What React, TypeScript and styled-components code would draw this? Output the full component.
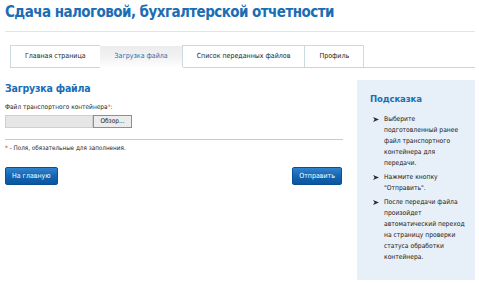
import React from 'react';
import styled, { createGlobalStyle } from 'styled-components';

const FONT = '"DejaVu Sans Condensed", "Liberation Sans", Arial, sans-serif';
const BLUE = '#1b6db4';

const GlobalStyle = createGlobalStyle`
  html, body {
    margin: 0;
    padding: 0;
    background: #ffffff;
  }
  body {
    font-family: ${FONT};
    color: #222;
  }
`;

const Page = styled.div`
  width: 479px;
  height: 283px;
  box-sizing: border-box;
  padding: 0 4px 0 5px;
  overflow: hidden;
`;

const Header = styled.h1`
  margin: 0;
  padding: 0 0 7px;
  font-size: 15px;
  line-height: 24px;
  letter-spacing: -0.55px;
  font-weight: bold;
  color: ${BLUE};
  border-bottom: 1px solid #dfe5e8;
  white-space: nowrap;
`;

const TabBar = styled.div`
  display: flex;
  margin: 13px 0 0 5px;
  border-bottom: 1px solid #c5d6dd;
`;

const Tab = styled.div<{ active?: boolean }>`
  line-height: 21px;
  padding: 0 14px;
  font-size: 7px;
  white-space: nowrap;
  cursor: pointer;
  color: ${p => (p.active ? BLUE : '#222')};
  border: 1px solid ${p => (p.active ? 'transparent' : '#c9dae0')};
  border-bottom: none;
  margin-right: -1px;
  background: ${p =>
    p.active ? 'linear-gradient(to bottom, #ececec 0%, #f2f2f2 50%, #ffffff 100%)' : '#ffffff'};
  margin-bottom: ${p => (p.active ? '-1px' : '0')};
  height: ${p => (p.active ? '22px' : '21px')};
`;

const Body = styled.div`
  display: flex;
  justify-content: space-between;
  margin-top: 12px;
`;

const Main = styled.div`
  width: 338px;
`;

const SectionTitle = styled.h2`
  margin: 0;
  font-size: 10.5px;
  line-height: 16px;
  letter-spacing: -0.2px;
  font-weight: bold;
  color: ${BLUE};
`;

const FieldLabel = styled.div`
  margin-top: 6px;
  font-size: 6.5px;
  line-height: 11px;
`;

const Req = styled.span`
  color: #e03a3a;
`;

const FileRow = styled.div`
  display: flex;
  margin-top: 2px;
  height: 13px;
`;

const FileField = styled.div`
  width: 88px;
  box-sizing: border-box;
  background: #e6e6e6;
  border: 1px solid #cfcfcf;
`;

const BrowseButton = styled.button`
  width: 39px;
  height: 13px;
  padding: 0;
  box-sizing: border-box;
  border: 1px solid #8f8f8f;
  background: #ececec;
  font-family: ${FONT};
  font-size: 6.5px;
  line-height: 11px;
  color: #222;
`;

const Divider = styled.div`
  margin-top: 11px;
  border-top: 1px solid #b9d0d8;
`;

const Note = styled.div`
  margin-top: 3px;
  font-size: 6.3px;
  line-height: 10px;
`;

const Actions = styled.div`
  display: flex;
  justify-content: space-between;
  margin-top: 14px;
  padding-right: 1px;
`;

const BlueButton = styled.button`
  height: 18px;
  padding: 0 6px;
  border: 1px solid #0b4f95;
  border-radius: 2px;
  background: linear-gradient(to bottom, #2f82cc 0%, #1466b3 50%, #0b559f 100%);
  color: #ffffff;
  font-family: ${FONT};
  font-size: 7px;
  line-height: 16px;
  cursor: pointer;
`;

const Sidebar = styled.aside`
  width: 118px;
  height: 200px;
  box-sizing: border-box;
  background: #e7f0f9;
  padding: 11px 4px 0 13px;
`;

const SidebarTitle = styled.h3`
  margin: 0;
  font-size: 9.5px;
  line-height: 16px;
  letter-spacing: -0.15px;
  font-weight: bold;
  color: ${BLUE};
`;

const HintList = styled.ul`
  list-style: none;
  margin: 7px 0 0;
  padding: 0 0 0 3px;
`;

const HintItem = styled.li`
  display: flex;
  align-items: flex-start;
  margin-bottom: 3px;
  font-size: 6.7px;
  line-height: 11px;
  color: #1a1a1a;
  white-space: nowrap;
`;

const Bullet = styled.svg`
  flex: none;
  width: 6px;
  height: 5px;
  margin: 3px 5px 0 0;
`;

const Arrow = () => (
  <Bullet viewBox="0 0 6 5">
    <polygon points="0,0 6,2.5 0,5 1.6,2.5" fill="#2a2a2a" />
  </Bullet>
);

const hints: string[][] = [
  ['Выберите', 'подготовленный ранее', 'файл транспортного', 'контейнера для', 'передачи.'],
  ['Нажмите кнопку', '"Отправить".'],
  ['После передачи файла', 'произойдет', 'автоматический переход', 'на страницу проверки', 'статуса обработки', 'контейнера.'],
];

const tabs = ['Главная страница', 'Загрузка файла', 'Список переданных файлов', 'Профиль'];

export default function App() {
  return (
    <Page>
      <GlobalStyle />
      <Header>Сдача налоговой, бухгалтерской отчетности</Header>
      <TabBar>
        {tabs.map(t => (
          <Tab key={t} active={t === 'Загрузка файла'}>{t}</Tab>
        ))}
      </TabBar>
      <Body>
        <Main>
          <SectionTitle>Загрузка файла</SectionTitle>
          <FieldLabel>
            Файл транспортного контейнера<Req>*</Req>:
          </FieldLabel>
          <FileRow>
            <FileField />
            <BrowseButton>Обзор...</BrowseButton>
          </FileRow>
          <Divider />
          <Note>
            <Req>*</Req> - Поля, обязательные для заполнения.
          </Note>
          <Actions>
            <BlueButton>На главную</BlueButton>
            <BlueButton>Отправить</BlueButton>
          </Actions>
        </Main>
        <Sidebar>
          <SidebarTitle>Подсказка</SidebarTitle>
          <HintList>
            {hints.map((lines, i) => (
              <HintItem key={i}>
                <Arrow />
                <div>
                  {lines.map((l, j) => (
                    <React.Fragment key={j}>
                      {l}
                      {j < lines.length - 1 && <br />}
                    </React.Fragment>
                  ))}
                </div>
              </HintItem>
            ))}
          </HintList>
        </Sidebar>
      </Body>
    </Page>
  );
}
